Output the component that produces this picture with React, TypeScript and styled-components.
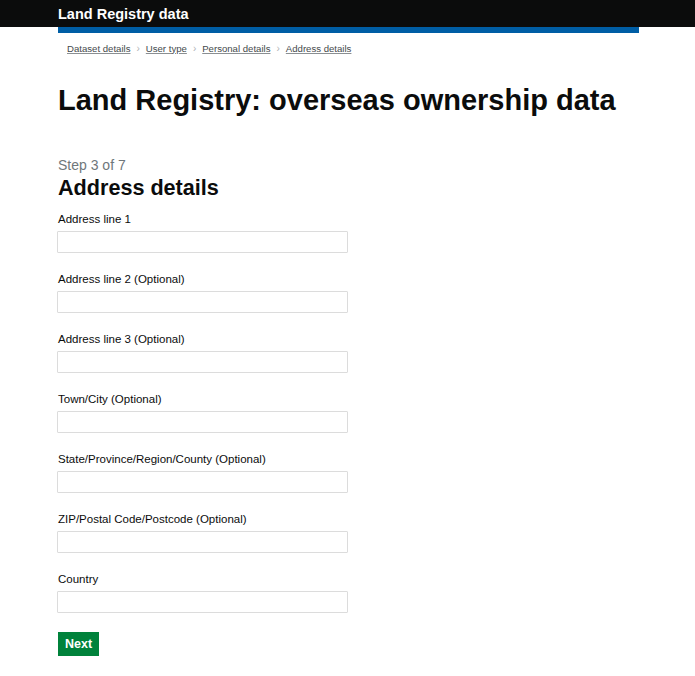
import React from "react";
import styled, { createGlobalStyle } from "styled-components";

const Global = createGlobalStyle`
  html, body { margin: 0; padding: 0; background: #fff; }
  body { font-family: "Liberation Sans", Arial, sans-serif; color: #0b0c0c; }
  * { box-sizing: border-box; }
`;

const Header = styled.header`
  background: #0b0c0c;
  height: 27px;
  display: flex;
  align-items: center;
  padding-left: 58px;
`;

const HeaderTitle = styled.span`
  color: #fff;
  font-weight: 700;
  font-size: 14.5px;
`;

const Container = styled.div`
  width: 581px;
  margin-left: 58px;
`;

const BlueBar = styled.div`
  height: 6px;
  background: #005ea5;
`;

const Breadcrumbs = styled.nav`
  display: flex;
  align-items: center;
  padding: 9px 0 0 9px;
  height: 21px;
  font-size: 9.6px;
`;

const Crumb = styled.a`
  color: #454a4d;
  text-decoration: underline;
  text-decoration-color: #8a8f92;
`;

const Sep = styled.span`
  color: #b1b4b6;
  margin: 0 6px;
  font-size: 10px;
`;

const Title = styled.h1`
  margin: 29px 0 0;
  font-size: 29px;
  font-weight: 700;
  line-height: 34px;
`;

const Step = styled.div`
  margin-top: 38px;
  font-size: 14px;
  color: #6f777b;
  line-height: 20px;
`;

const SubTitle = styled.h2`
  margin: 0;
  font-size: 21.6px;
  font-weight: 700;
  line-height: 26px;
`;

const Form = styled.form`
  display: flex;
  flex-direction: column;
  gap: 19px;
  margin-top: 11px;
`;

const Field = styled.div`
  display: flex;
  flex-direction: column;
`;

const Label = styled.label`
  font-size: 11.5px;
  line-height: 14px;
  margin-bottom: 5px;
`;

const Input = styled.input`
  width: 291px;
  height: 22px;
  margin-left: -1px;
  border: 1px solid #dcdcdc;
  border-radius: 1px;
  padding: 2px 4px;
  font: inherit;
`;

const Button = styled.button`
  align-self: flex-start;
  background: #00823b;
  color: #fff;
  border: none;
  box-shadow: 0 2px 0 #003618;
  font-family: "Liberation Sans", Arial, sans-serif;
  font-weight: 700;
  font-size: 12.5px;
  height: 24px;
  padding: 0 7px;
`;

const fields = [
  "Address line 1",
  "Address line 2 (Optional)",
  "Address line 3 (Optional)",
  "Town/City (Optional)",
  "State/Province/Region/County (Optional)",
  "ZIP/Postal Code/Postcode (Optional)",
  "Country",
];

export default function App() {
  return (
    <>
      <Global />
      <Header>
        <HeaderTitle>Land Registry data</HeaderTitle>
      </Header>
      <Container>
        <BlueBar />
        <Breadcrumbs>
          <Crumb>Dataset details</Crumb>
          <Sep>›</Sep>
          <Crumb>User type</Crumb>
          <Sep>›</Sep>
          <Crumb>Personal details</Crumb>
          <Sep>›</Sep>
          <Crumb>Address details</Crumb>
        </Breadcrumbs>
        <Title>Land Registry: overseas ownership data</Title>
        <Step>Step 3 of 7</Step>
        <SubTitle>Address details</SubTitle>
        <Form onSubmit={(e) => e.preventDefault()}>
          {fields.map((f) => (
            <Field key={f}>
              <Label>{f}</Label>
              <Input type="text" />
            </Field>
          ))}
          <Button type="submit">Next</Button>
        </Form>
      </Container>
    </>
  );
}
